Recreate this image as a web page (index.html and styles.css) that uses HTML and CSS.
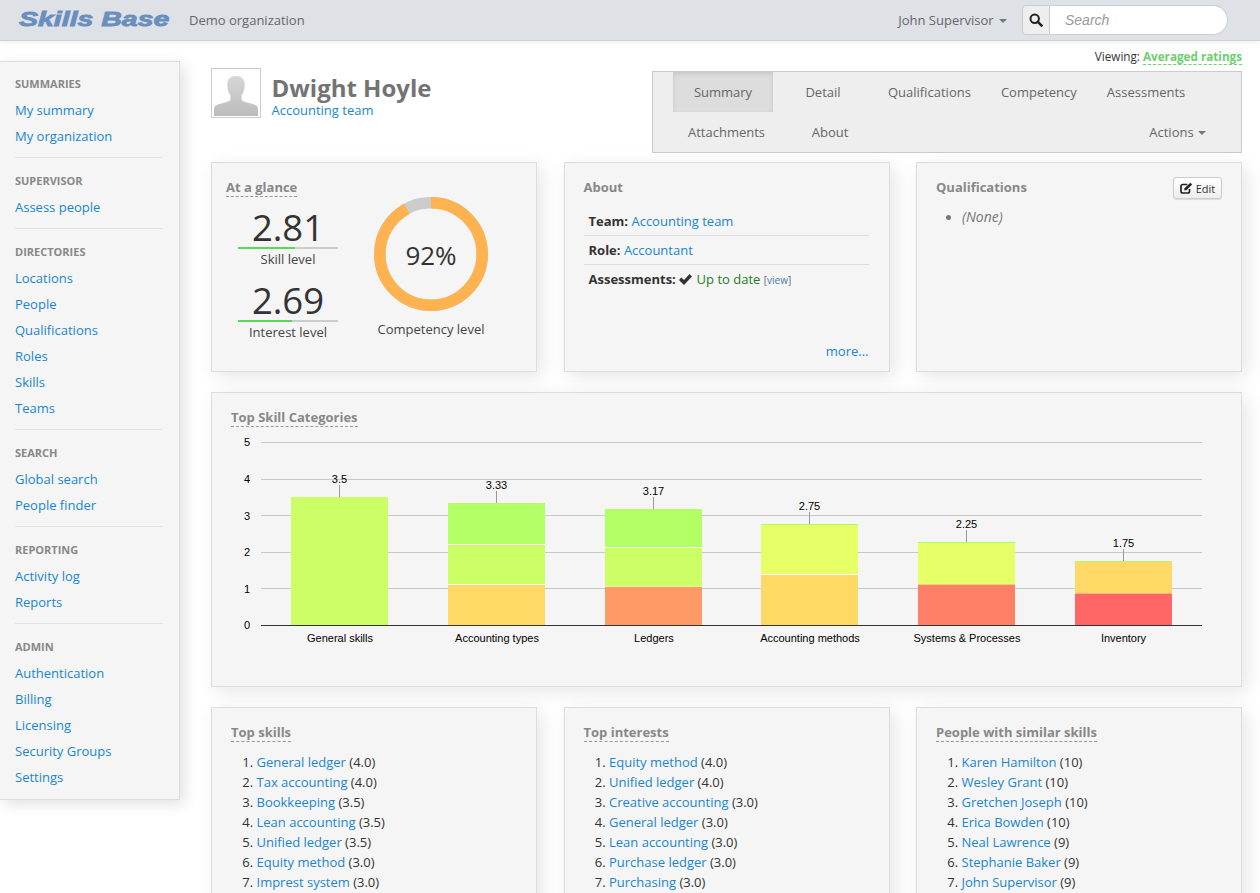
FILE: index.html
```html
<!DOCTYPE html>
<html lang="en">
<head>
<meta charset="utf-8">
<title>Skills Base</title>
<link rel="stylesheet" href="styles.css">
</head>
<body>
<header class="navbar">
  <div class="brand"><span class="brand-text">Skills Base</span></div>
  <div class="org">Demo organization</div>
  <div class="nav-right">
    <div class="user">John Supervisor <span class="caret"></span></div>
    <div class="search">
      <span class="search-addon">
        <svg width="14" height="14" viewBox="0 0 14 14"><circle cx="5.7" cy="5.7" r="4.2" fill="none" stroke="#222" stroke-width="2"/><path d="M8.8 8.8 12.6 12.6" stroke="#222" stroke-width="2.6" stroke-linecap="round"/></svg>
      </span>
      <span class="search-input">Search</span>
    </div>
  </div>
</header>
<div class="page">
  <aside class="sidebar">
    <div class="side-head">SUMMARIES</div>
    <a class="side-link">My summary</a>
    <a class="side-link">My organization</a>
    <hr class="side-rule">
    <div class="side-head">SUPERVISOR</div>
    <a class="side-link">Assess people</a>
    <hr class="side-rule">
    <div class="side-head">DIRECTORIES</div>
    <a class="side-link">Locations</a>
    <a class="side-link">People</a>
    <a class="side-link">Qualifications</a>
    <a class="side-link">Roles</a>
    <a class="side-link">Skills</a>
    <a class="side-link">Teams</a>
    <hr class="side-rule">
    <div class="side-head">SEARCH</div>
    <a class="side-link">Global search</a>
    <a class="side-link">People finder</a>
    <hr class="side-rule">
    <div class="side-head">REPORTING</div>
    <a class="side-link">Activity log</a>
    <a class="side-link">Reports</a>
    <hr class="side-rule">
    <div class="side-head">ADMIN</div>
    <a class="side-link">Authentication</a>
    <a class="side-link">Billing</a>
    <a class="side-link">Licensing</a>
    <a class="side-link">Security Groups</a>
    <a class="side-link">Settings</a>
  </aside>
  <main class="main">
    <div class="viewing">Viewing: <span class="viewing-value">Averaged ratings</span></div>
    <div class="head">
      <div class="person">
        <div class="avatar">
          <svg width="48" height="48" viewBox="0 0 48 48"><defs><linearGradient id="sil" x1="0" y1="0" x2="0" y2="1"><stop offset="0" stop-color="#d6d6d6"/><stop offset="1" stop-color="#bcbcbc"/></linearGradient></defs><path fill="url(#sil)" d="M24 7c-5.500 0-8.700 3.400-8.700 8.600 0 1.500.1 2.900.4 4.400.5 2.400 1.400 4.600 2.800 6.400v3.100c0 1.700-1 2.600-3 3.300-3.200 1.100-8.500 2-11.700 3.800-1.400.8-1.700 2.300-1.800 5.400V47h44v-5c-.1-3.100-.4-4.600-1.800-5.400-3.200-1.800-8.500-2.700-11.700-3.800-2-.7-3-1.600-3-3.300v-3.100c1.400-1.800 2.300-4 2.800-6.400.3-1.500.4-2.900.4-4.400C32.700 10.400 29.500 7 24 7z"/></svg>
        </div>
        <div class="person-text">
          <h1 class="person-name">Dwight Hoyle</h1>
          <a class="link person-team">Accounting team</a>
        </div>
      </div>
      <nav class="tabs">
        <a class="tab tab-active">Summary</a>
        <a class="tab">Detail</a>
        <a class="tab">Qualifications</a>
        <a class="tab">Competency</a>
        <a class="tab">Assessments</a>
        <a class="tab">Attachments</a>
        <a class="tab">About</a>
        <a class="tab tab-actions">Actions <span class="caret"></span></a>
      </nav>
    </div>

    <div class="row row-top">
      <section class="card card-glance">
        <h2 class="card-title dashed">At a glance</h2>
        <div class="glance">
          <div class="stats">
            <div class="stat-num">2.81</div>
            <div class="stat-bar"><div class="stat-fill" style="width:57%"></div></div>
            <div class="stat-label">Skill level</div>
            <div class="stat-num stat-second">2.69</div>
            <div class="stat-bar"><div class="stat-fill" style="width:54%"></div></div>
            <div class="stat-label">Interest level</div>
          </div>
          <div class="donut-col">
            <svg class="donut" width="114" height="114" viewBox="0 0 114 114">
              <circle cx="57" cy="57" r="51.2" fill="none" stroke="#ccc" stroke-width="11.500"/>
              <circle cx="57" cy="57" r="51.2" fill="none" stroke="#ffb350" stroke-width="11.500" stroke-dasharray="296 400" transform="rotate(-90 57 57)"/>
              <text class="donut-text" x="57" y="68" text-anchor="middle">92%</text>
            </svg>
            <div class="stat-label donut-label">Competency level</div>
          </div>
        </div>
      </section>

      <section class="card card-about">
        <h2 class="card-title">About</h2>
        <div class="about-rows">
          <div class="about-row"><b>Team:</b> <a class="link">Accounting team</a></div>
          <div class="about-row"><b>Role:</b> <a class="link">Accountant</a></div>
          <div class="about-row about-last"><b>Assessments:</b>
            <svg class="check" width="13" height="11" viewBox="0 0 13 11"><path d="M0 6 2.300 3.500l2.700 2.600L10.600 0 13 2.400 5 11z" fill="#333"/></svg>
            <span class="ok">Up to date</span> <span class="view">[<a class="view-link">view</a>]</span></div>
        </div>
        <a class="link more">more...</a>
      </section>

      <section class="card">
        <div class="qual-head">
          <h2 class="card-title">Qualifications</h2>
          <button class="edit-btn" type="button">
            <svg width="13" height="12" viewBox="0 0 13 12"><path d="M9.500 7v2.300A1.700 1.700 0 0 1 7.800 11H2.700A1.700 1.700 0 0 1 1 9.300V4.200a1.700 1.700 0 0 1 1.700-1.700h4.600" fill="none" stroke="#222" stroke-width="1.700"/><path d="M4.500 6.200 10.300.8l1.800 1.800-5.500 5.500-2.400.5z" fill="#222"/></svg>
            Edit</button>
        </div>
        <ul class="qual-list"><li><em>(None)</em></li></ul>
      </section>
    </div>

    <section class="card card-chart">
      <h2 class="card-title dashed">Top Skill Categories</h2>
      <svg class="chart" width="986" height="239" viewBox="231 432 986 239">
        <g stroke="#c8c8c8" stroke-width="1">
          <path d="M261 442.500H1202M261 479.500H1202M261 515.500H1202M261 552.500H1202M261 588.500H1202"/>
        </g>
        <g class="axis" text-anchor="end">
          <text x="250" y="446">5</text>
          <text x="250" y="483">4</text>
          <text x="250" y="520">3</text>
          <text x="250" y="556">2</text>
          <text x="250" y="593">1</text>
          <text x="250" y="629">0</text>
        </g>
        <g stroke="#999" stroke-width="1">
          <path d="M339.500 485V497M496.500 491V503M653.500 497V509M809.500 512V524M966.500 530V542M1123.500 549V561"/>
        </g>
        <rect x="291" y="497" width="97" height="128" fill="#ccff66"/>

        <rect x="448" y="503" width="97" height="41" fill="#b3ff66"/>
        <rect x="448" y="544" width="97" height="1" fill="#fff"/>
        <rect x="448" y="545" width="97" height="39" fill="#ccff66"/>
        <rect x="448" y="584" width="97" height="1" fill="#fff"/>
        <rect x="448" y="585" width="97" height="40" fill="#ffd966"/>

        <rect x="605" y="509" width="97" height="38" fill="#b3ff66"/>
        <rect x="605" y="547" width="97" height="1" fill="#fff"/>
        <rect x="605" y="548" width="97" height="38" fill="#ccff66"/>
        <rect x="605" y="586" width="97" height="1" fill="#fbeea0"/>
        <rect x="605" y="587" width="97" height="38" fill="#ff9966"/>

        <rect x="761" y="524" width="97" height="1" fill="#a6ff66"/>
        <rect x="761" y="525" width="97" height="49" fill="#e6ff66"/>
        <rect x="761" y="574" width="97" height="1" fill="#fff"/>
        <rect x="761" y="575" width="97" height="50" fill="#ffd966"/>

        <rect x="918" y="542" width="97" height="1" fill="#a6ff66"/>
        <rect x="918" y="543" width="97" height="41" fill="#e6ff66"/>
        <rect x="918" y="584" width="97" height="1" fill="#ffc788"/>
        <rect x="918" y="585" width="97" height="40" fill="#ff8066"/>

        <rect x="1075" y="561" width="97" height="1" fill="#b8f56a"/>
        <rect x="1075" y="562" width="97" height="31" fill="#ffd966"/>
        <rect x="1075" y="593" width="97" height="1" fill="#ffb080"/>
        <rect x="1075" y="594" width="97" height="31" fill="#ff6666"/>

        <path d="M261 625.500H1202" stroke="#333" stroke-width="1"/>
        <g class="axis" text-anchor="middle">
          <text x="339.500" y="483">3.5</text>
          <text x="496.500" y="489">3.33</text>
          <text x="653.500" y="495">3.17</text>
          <text x="809.500" y="510">2.75</text>
          <text x="966.500" y="528">2.25</text>
          <text x="1123.500" y="547">1.75</text>
          <text x="340" y="642">General skills</text>
          <text x="497" y="642">Accounting types</text>
          <text x="654" y="642">Ledgers</text>
          <text x="810" y="642">Accounting methods</text>
          <text x="967" y="642">Systems &amp; Processes</text>
          <text x="1123.500" y="642">Inventory</text>
        </g>
      </svg>
    </section>

    <div class="row row-bottom">
      <section class="card card-list">
        <h2 class="card-title dashed">Top skills</h2>
        <ol class="rank">
          <li><a class="link">General ledger</a> (4.0)</li>
          <li><a class="link">Tax accounting</a> (4.0)</li>
          <li><a class="link">Bookkeeping</a> (3.5)</li>
          <li><a class="link">Lean accounting</a> (3.5)</li>
          <li><a class="link">Unified ledger</a> (3.5)</li>
          <li><a class="link">Equity method</a> (3.0)</li>
          <li><a class="link">Imprest system</a> (3.0)</li>
        </ol>
      </section>
      <section class="card card-list">
        <h2 class="card-title dashed">Top interests</h2>
        <ol class="rank">
          <li><a class="link">Equity method</a> (4.0)</li>
          <li><a class="link">Unified ledger</a> (4.0)</li>
          <li><a class="link">Creative accounting</a> (3.0)</li>
          <li><a class="link">General ledger</a> (3.0)</li>
          <li><a class="link">Lean accounting</a> (3.0)</li>
          <li><a class="link">Purchase ledger</a> (3.0)</li>
          <li><a class="link">Purchasing</a> (3.0)</li>
        </ol>
      </section>
      <section class="card card-list">
        <h2 class="card-title dashed">People with similar skills</h2>
        <ol class="rank">
          <li><a class="link">Karen Hamilton</a> (10)</li>
          <li><a class="link">Wesley Grant</a> (10)</li>
          <li><a class="link">Gretchen Joseph</a> (10)</li>
          <li><a class="link">Erica Bowden</a> (10)</li>
          <li><a class="link">Neal Lawrence</a> (9)</li>
          <li><a class="link">Stephanie Baker</a> (9)</li>
          <li><a class="link">John Supervisor</a> (9)</li>
        </ol>
      </section>
    </div>
  </main>
</div>
</body>
</html>
```
FILE: styles.css
```css
* { box-sizing: border-box; }
html, body { height: 100%; overflow: hidden; }
body {
  margin: 0;
  background: #fff;
  color: #333;
  font-family: "Open Sans", "Liberation Sans", sans-serif;
  font-size: 13px;
  line-height: 20px;
}
a { cursor: pointer; }
.link { color: #1a86cf; }

.navbar {
  display: flex;
  align-items: center;
  height: 41px;
  background: #dee1e6;
  border-bottom: 1px solid #cfd1d4;
  padding: 0 32px 0 19px;
  box-shadow: 0 2px 6px rgba(0,0,0,.06);
}
.brand { width: 150px; height: 24px; }
.brand-text {
  display: inline-block;
  font-family: "Liberation Sans", sans-serif;
  font-weight: bold;
  font-style: italic;
  font-size: 19.5px;
  line-height: 22px;
  color: #6a8fbf;
  -webkit-text-stroke: .8px #6a8fbf;
  white-space: nowrap;
  transform: scaleX(1.46);
  transform-origin: left center;
}
.org { margin-left: 20px; color: #666; }
.nav-right { margin-left: auto; display: flex; align-items: center; }
.user { color: #666; }
.caret {
  display: inline-block;
  width: 0;
  height: 0;
  margin-left: 2px;
  vertical-align: 2px;
  border-top: 4px solid #777;
  border-left: 4px solid transparent;
  border-right: 4px solid transparent;
}
.search { display: flex; height: 30px; margin-left: 15px; width: 206px; }
.search-addon {
  width: 28px;
  display: flex;
  align-items: center;
  justify-content: center;
  background: #eee;
  border: 1px solid #ccc;
  border-radius: 4px 0 0 4px;
}
.search-input {
  flex: 1;
  background: #fff;
  border: 1px solid #ccc;
  border-left: 0;
  border-radius: 0 15px 15px 0;
  padding-left: 15px;
  font-family: "Liberation Sans", sans-serif;
  font-style: italic;
  font-size: 14px;
  line-height: 28px;
  color: #999;
}

.page { display: flex; align-items: flex-start; }
.sidebar {
  flex: none;
  width: 180px;
  margin-top: 20px;
  padding: 9px 16px 9px 15px;
  background: #f5f5f5;
  border: 1px solid #ddd;
  border-left: 0;
  box-shadow: 4px 4px 14px rgba(0,0,0,.12);
}
.side-head {
  font-size: 11px;
  font-weight: 700;
  line-height: 26px;
  color: #888;
}
.side-link { display: block; line-height: 26px; color: #1a86cf; }
.side-rule { height: 1px; margin: 8px 0 10px; border: 0; background: #e3e3e3; }

.main { width: 1031px; margin-left: 31px; }
.viewing {
  height: 24px;
  padding-top: 7px;
  text-align: right;
  font-size: 11.7px;
  line-height: 16px;
  color: #333;
}
.viewing-value {
  font-weight: 700;
  color: #6ccf6c;
  border-bottom: 1px dashed #6ccf6c;
}
.head { display: flex; justify-content: space-between; align-items: flex-start; height: 97px; }
.person { display: flex; margin-top: 3px; }
.avatar {
  width: 50px;
  height: 50px;
  background: #fff;
  border: 1px solid #ccc;
}
.avatar svg { display: block; }
.person-text { margin: 5px 0 0 10.5px; }
.person-name {
  margin: 0;
  font-size: 24px;
  font-weight: 700;
  line-height: 30px;
  color: #737373;
}
.person-team { display: block; line-height: 15px; }
.tabs {
  display: flex;
  flex-wrap: wrap;
  width: 590px;
  margin-top: 6px;
  padding: 0 20px;
  background: #eee;
  border: 1px solid #ccc;
}
.tab {
  min-width: 100px;
  height: 40px;
  padding: 0 15px;
  text-align: center;
  line-height: 40px;
  color: #666;
}
.tab-active { background: #ddd; box-shadow: inset 0 2px 4px rgba(0,0,0,.1); }
.tab-actions { margin-left: auto; min-width: 0; }
.tab-actions .caret { margin-left: 1px; }

.row { display: grid; grid-template-columns: repeat(3, 326px); column-gap: 26.5px; }
.row-top { height: 210px; margin-bottom: 20px; }
.row-bottom { margin-top: 20px; height: 300px; }
.card {
  background: #f5f5f5;
  border: 1px solid #ddd;
  padding: 15px 19px;
  box-shadow: 5px 5px 18px rgba(0,0,0,.1);
}
.card-glance { padding-left: 14px; }
.card-title {
  display: block;
  width: fit-content;
  margin: 0;
  font-size: 13px;
  font-weight: 700;
  line-height: 18px;
  color: #888;
}
.dashed { border-bottom: 1px dashed #999; }

.glance { display: flex; }
.stats { width: 100px; margin: 10px 0 0 12px; }
.stat-num {
  font-size: 36.5px;
  line-height: 40px;
  text-align: center;
  color: #333;
}
.stat-second { margin-top: 11px; }
.stat-bar { height: 2px; background: #ccc; }
.stat-fill { height: 2px; background: #5bd75b; }
.stat-label { text-align: center; line-height: 20px; color: #444; white-space: nowrap; }
.donut-col { width: 114px; margin-left: 36px; }
.donut { display: block; }
.donut-text { font-size: 26px; fill: #333; font-family: "Open Sans", sans-serif; }
.donut-label { margin-top: 8px; }

.card-about { display: flex; flex-direction: column; padding: 15px 20px 10px 19px; }
.about-rows { margin-top: 11px; }
.about-row {
  height: 29px;
  padding-left: 5px;
  line-height: 28px;
  border-bottom: 1px solid #ddd;
}
.about-last { border-bottom: 0; }
.check { margin-right: 1px; vertical-align: -1px; }
.ok { color: #1e7d1e; }
.view { font-size: 10px; color: #666; }
.view-link { color: #4a78b5; }
.more { margin-top: auto; text-align: right; }

.qual-head { display: flex; justify-content: space-between; align-items: flex-start; }
.edit-btn {
  height: 22px;
  width: 49px;
  margin-top: -1px;
  padding: 0;
  display: flex;
  align-items: center;
  justify-content: center;
  gap: 3px;
  font-family: "Open Sans", sans-serif;
  font-size: 11px;
  color: #333;
  background: linear-gradient(#fff, #eee);
  border: 1px solid #ccc;
  border-radius: 3px;
  box-shadow: 0 1px 1px rgba(0,0,0,.1);
}
.qual-list { margin: 8px 0 0; padding-left: 26px; color: #777; }
.qual-list em { font-size: 14px; }

.card-chart { height: 295px; }
.chart { display: block; margin-top: 5px; }
.axis text { font-family: "Liberation Sans", Arial, sans-serif; font-size: 11px; fill: #000; }

.rank { margin: 10px 0 0; padding-left: 25.5px; }
.rank li { line-height: 20px; }
```
